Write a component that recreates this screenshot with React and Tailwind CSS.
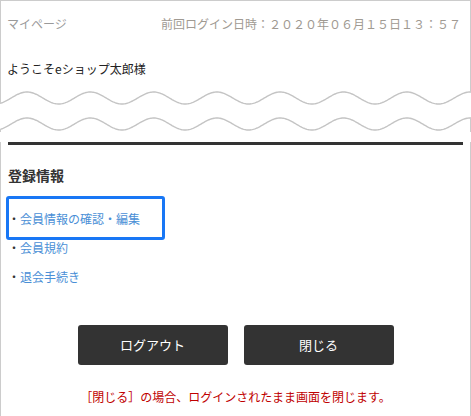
import React from "react";

const W = 471;
const PERIOD = 63.3;
const PHASE = 27;

// y position of a torn-edge wave line at x
const waveY = (x, center) => center - 6 * Math.cos((2 * Math.PI * (x - PHASE)) / PERIOD);

const wavePoints = (center) => {
  const pts = [];
  for (let x = 0; x <= W; x += 1) {
    pts.push(`${x},${waveY(x, center).toFixed(2)}`);
  }
  return pts.join(" ");
};

function TornEdge() {
  const top = 8; // centre of upper wave inside the svg
  const bottom = 34; // centre of lower wave
  return (
    <svg width={W} height={42} viewBox={`0 0 ${W} 42`} className="block">
      <polyline points={wavePoints(top)} fill="none" stroke="#c4c4c4" strokeWidth="1.4" />
      <polyline points={wavePoints(bottom)} fill="none" stroke="#c4c4c4" strokeWidth="1.4" />
      <line x1="0.5" y1="0" x2="0.5" y2={waveY(0, top)} stroke="#cccccc" strokeWidth="1" />
      <line x1="0.5" y1={waveY(0, bottom)} x2="0.5" y2="42" stroke="#cccccc" strokeWidth="1" />
      <line x1="470.5" y1="0" x2="470.5" y2={waveY(470, top)} stroke="#cccccc" strokeWidth="1" />
      <line x1="470.5" y1={waveY(470, bottom)} x2="470.5" y2="42" stroke="#cccccc" strokeWidth="1" />
    </svg>
  );
}

const links = ["会員情報の確認・編集", "会員規約", "退会手続き"];

export default function App() {
  return (
    <div className="w-[471px] h-[416px] bg-white font-['Noto_Sans_CJK_JP','Noto_Sans',sans-serif] text-[#333]">
      <div className="h-[90px] border-t border-l border-r border-[#cccccc] pl-[6px] pr-[9px]">
        <div className="flex justify-between pt-[14px] text-[12px] leading-[18px]">
          <span className="text-[#9a9a9a]">マイページ</span>
          <span className="text-[#a09a92]">前回ログイン日時：２０２０年０６月１５日１３：５７</span>
        </div>
        <p className="mt-[27px] text-[12px] leading-[18px] text-[#222]">ようこそeショップ太郎様</p>
      </div>

      <TornEdge />

      <div className="h-[284px] border-l border-r border-b border-[#cccccc] px-[7px]">
        <div className="mt-[10px] h-[3px] bg-[#333]" />
        <h2 className="mt-[20px] text-[14px] leading-[20px] font-bold text-[#333]">登録情報</h2>
        <ul className="mt-[19px]">
          {links.map((label, i) => (
            <li key={label} className="relative h-[29px] flex items-center text-[12px] leading-[18px]">
              <span className="text-[#333]">・</span>
              <a href="#" className="text-[#4a8fd6]">{label}</a>
              {i === 0 && (
                <span className="absolute left-[-2px] top-[-8px] w-[159px] h-[44px] border-[3px] border-[#1877f5] rounded-[3px] pointer-events-none" />
              )}
            </li>
          ))}
        </ul>
        <div className="mt-[34px] flex justify-center gap-[16px]">
          <button className="w-[150px] h-[40px] bg-[#333] rounded-[3px] text-white text-[13px]">ログアウト</button>
          <button className="w-[150px] h-[40px] bg-[#333] rounded-[3px] text-white text-[13px]">閉じる</button>
        </div>
        <p className="mt-[23px] text-center text-[12px] leading-[18px] text-[#c00000]">
          ［閉じる］の場合、ログインされたまま画面を閉じます。
        </p>
      </div>
    </div>
  );
}
